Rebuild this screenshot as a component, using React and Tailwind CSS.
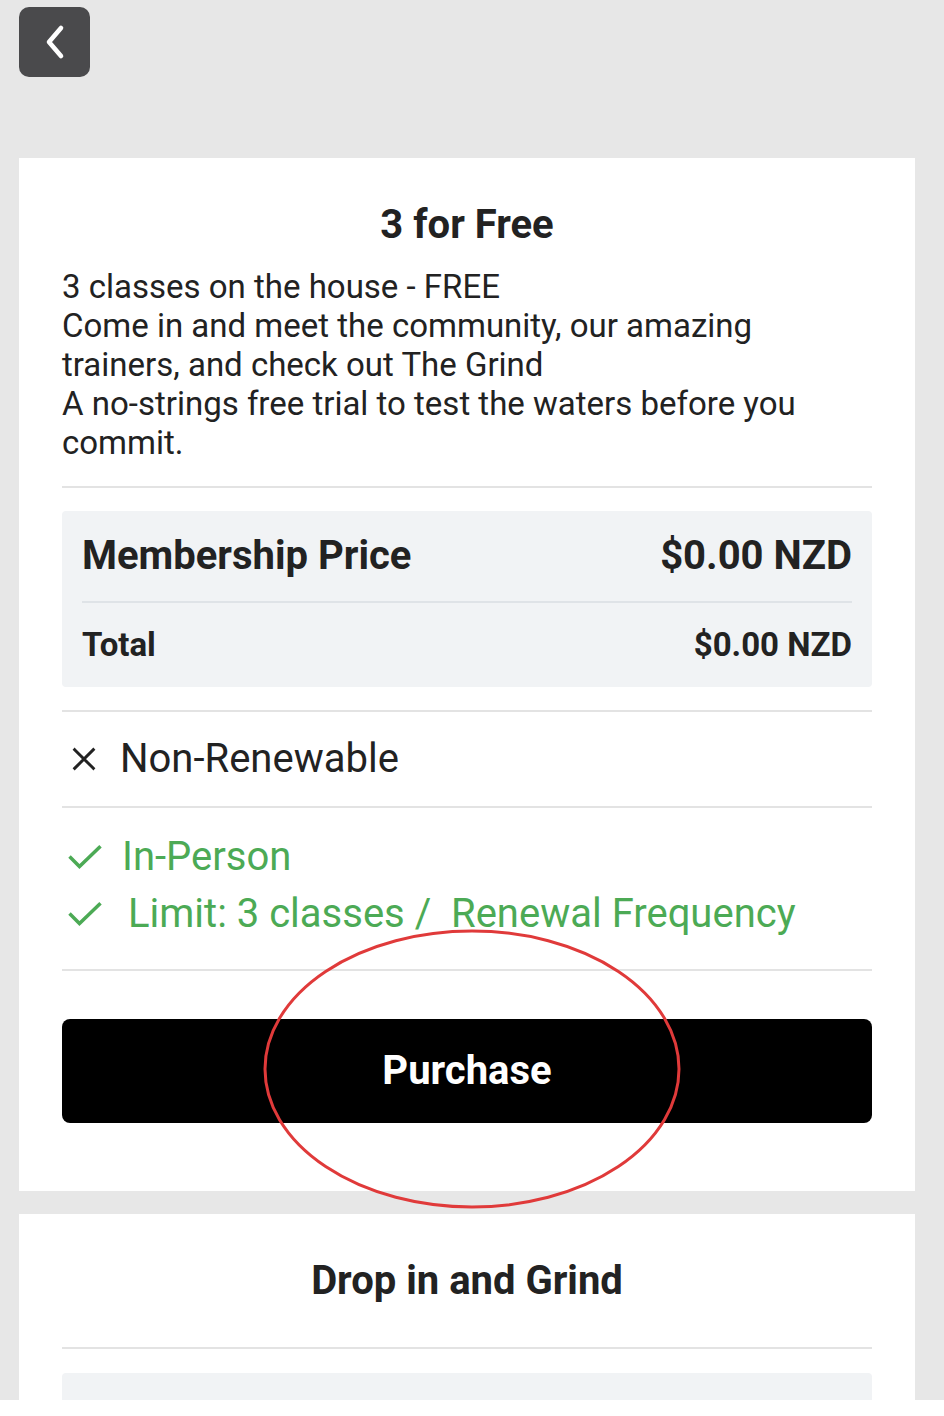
import React from "react";

function Chevron() {
  return (
    <svg width="24" height="38" viewBox="0 0 24 38" fill="none" stroke="white" strokeWidth="4.6" strokeLinecap="round" strokeLinejoin="round">
      <path d="M18 5L6 19l12 14" />
    </svg>
  );
}

function Cross() {
  return (
    <svg width="32" height="32" viewBox="0 0 24 24" fill="none" stroke="#222" strokeWidth="2.2" strokeLinecap="square">
      <path d="M5 5l14 14M19 5L5 19" />
    </svg>
  );
}

function Check() {
  return (
    <svg width="38" height="38" viewBox="0 0 24 24" fill="none" stroke="#4caa55" strokeWidth="2.2" strokeLinecap="square">
      <path d="M3 12.5l5.5 5.5L21 6" />
    </svg>
  );
}

export default function App() {
  return (
    <div className="relative h-[1416px] overflow-hidden bg-[#e7e7e7] font-['Roboto',sans-serif] text-[#222]">
      {/* back */}
      <div className="pl-[19px] pt-[7px]">
        <button className="flex h-[70px] w-[71px] items-center justify-center rounded-[10px] bg-[#4a4a4c]">
          <Chevron />
        </button>
      </div>

      {/* plan card */}
      <div className="ml-[19px] mr-[29px] mt-[81px] bg-white px-[43px] pb-[68px] pt-[44px]">
        <h2 className="text-center text-[40px] font-bold leading-[46px]">3 for Free</h2>
        <div className="mt-[19px] pb-[24px] text-[33px] leading-[39px]">
          <p>3 classes on the house - FREE</p>
          <p>Come in and meet the community, our amazing trainers, and check out The Grind</p>
          <p>A no-strings free trial to test the waters before you commit.</p>
        </div>
        <div className="border-t-2 border-[#e3e3e3]" />

        <div className="mt-[23px] rounded-[4px] bg-[#f1f3f5] px-[20px]">
          <div className="flex h-[92px] items-center justify-between border-b-2 border-[#dfe3e7] text-[40px] font-bold">
            <span>Membership Price</span>
            <span>$0.00 NZD</span>
          </div>
          <div className="flex h-[84px] items-center justify-between text-[33px] font-bold">
            <span>Total</span>
            <span>$0.00 NZD</span>
          </div>
        </div>

        <div className="mt-[23px] flex h-[98px] items-center gap-[20px] border-y-2 border-[#e3e3e3] pl-[6px] text-[40px]">
          <Cross />
          <span>Non-Renewable</span>
        </div>

        <div className="flex flex-col gap-[14px] border-b-2 border-[#e3e3e3] pb-[34px] pt-[27px] text-[40px] leading-[43px] text-[#4caa55]">
          <div className="flex items-center gap-[18px] pl-[4px]">
            <Check />
            <span>In-Person</span>
          </div>
          <div className="flex items-center gap-[24px] pl-[4px]">
            <Check />
            <span>Limit: 3 classes /&nbsp; Renewal Frequency</span>
          </div>
        </div>

        <button className="mt-[48px] flex h-[104px] w-full items-center justify-center rounded-[8px] bg-black text-[40px] font-bold text-white">
          Purchase
        </button>
      </div>

      {/* next card */}
      <div className="ml-[19px] mr-[29px] mt-[23px] bg-white px-[43px] pt-[44px]">
        <h2 className="text-center text-[40px] font-bold leading-[46px]">Drop in and Grind</h2>
        <div className="mt-[43px] border-t-2 border-[#e3e3e3]" />
        <div className="mt-[24px] h-[120px] rounded-[4px] bg-[#f1f3f5]" />
      </div>

      {/* white strip at bottom edge */}
      <div className="absolute bottom-0 left-0 h-[16px] w-full bg-white" />

      {/* red annotation ellipse */}
      <svg className="pointer-events-none absolute left-[262px] top-[928px]" width="420" height="282" viewBox="0 0 420 282">
        <ellipse cx="210" cy="141" rx="207" ry="138" fill="none" stroke="#e03a3a" strokeWidth="3" />
      </svg>
    </div>
  );
}
